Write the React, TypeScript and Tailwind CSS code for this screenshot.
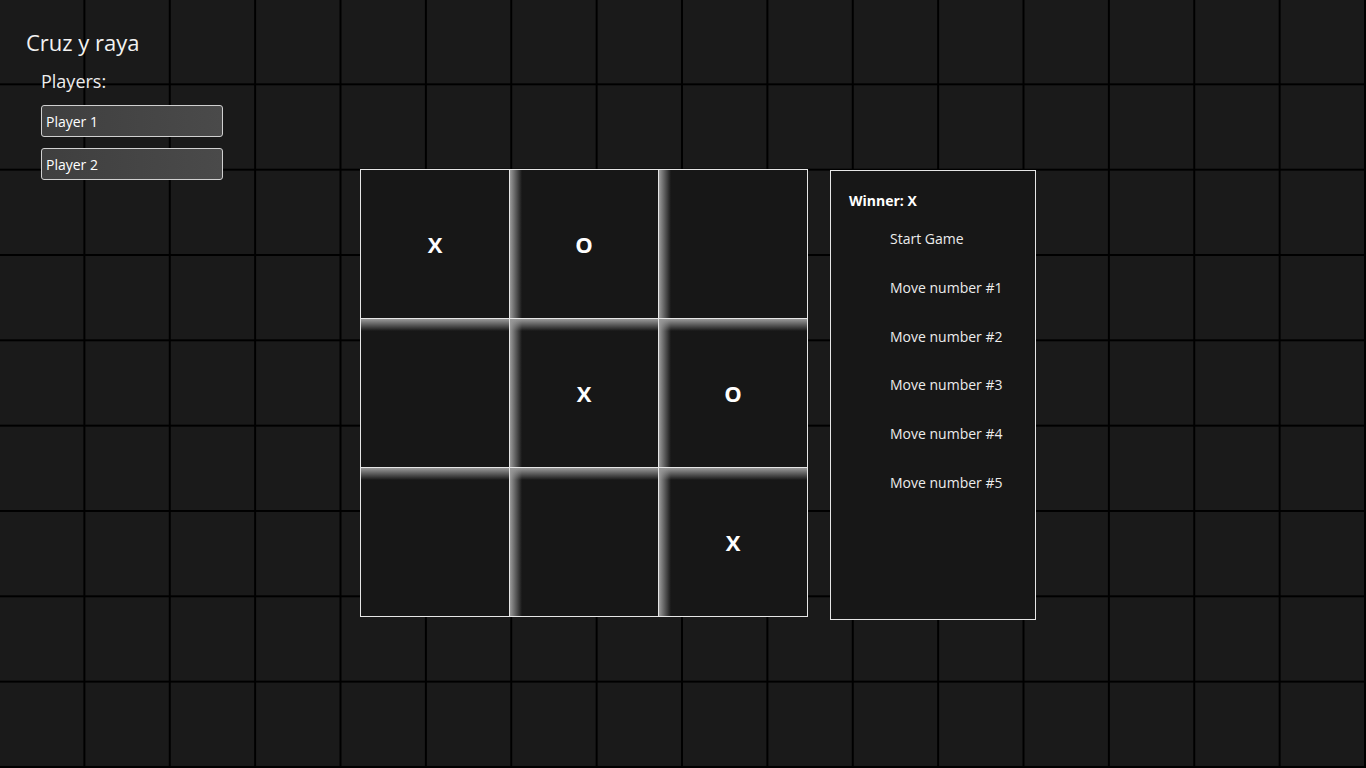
const BOARD: string[] = ["X", "O", "", "", "X", "O", "", "", "X"];
const MOVES = ["Start Game", "Move number #1", "Move number #2", "Move number #3", "Move number #4", "Move number #5"];

const FONT = { fontFamily: '"Open Sans", "Noto Sans", sans-serif' };

function Cell({ value, index }: { value: string; index: number }) {
  const row = Math.floor(index / 3);
  const col = index % 3;
  return (
    <div className="relative flex h-[149px] w-[149px] items-center justify-center border-b border-r border-[#e6e6e6] bg-[#171717]">
      {row > 0 && (
        <div className="absolute inset-x-0 top-0 h-[12px] bg-gradient-to-b from-[#9a9a9a] to-transparent" />
      )}
      {col > 0 && (
        <div className="absolute inset-y-0 left-0 w-[12px] bg-gradient-to-r from-[#9a9a9a] to-transparent" />
      )}
      <span className="relative text-[22px] font-bold text-white">{value}</span>
    </div>
  );
}

export default function App() {
  return (
    <div
      style={FONT}
      className="flex h-[768px] w-[1366px] overflow-hidden bg-[#1a1a1a] bg-[linear-gradient(to_right,transparent_calc(100%_-_2px),#000_calc(100%_-_2px)),linear-gradient(to_bottom,transparent_calc(100%_-_2px),#000_calc(100%_-_2px))] bg-[length:85.375px_85.333px] text-white"
    >
      <div className="w-[360px] shrink-0 pl-[26px] pt-[27px]">
        <h1 className="text-[22px] leading-[30px] text-[#f2f2f2]">Cruz y raya</h1>
        <div className="pl-[15px]">
          <p className="mt-[12px] text-[18px] leading-[24px] text-[#ededed]">Players:</p>
          <div className="mt-[12px] flex flex-col gap-[11px]">
            {["Player 1", "Player 2"].map((p) => (
              <div
                key={p}
                className="flex h-[32px] w-[182px] items-center rounded-[3px] border border-[#d0d0d0] bg-gradient-to-r from-[#3f3f3f] to-[#4a4a4a] px-[4px] text-[14px] text-white"
              >
                {p}
              </div>
            ))}
          </div>
        </div>
      </div>

      <div className="flex items-start pt-[169px]">
        <div className="grid grid-cols-3 border-l border-t border-[#e6e6e6]">
          {BOARD.map((v, i) => (
            <Cell key={i} value={v} index={i} />
          ))}
        </div>

        <div className="ml-[22px] mt-[1px] h-[450px] w-[206px] border border-[#e6e6e6] bg-[#171717] pl-[18px] pt-[20px]">
          <p className="text-[14px] font-bold leading-[20px] text-white">Winner: X</p>
          <div className="mt-[18px] flex flex-col gap-[28.8px] pl-[41px]">
            {MOVES.map((m) => (
              <p key={m} className="text-[14px] leading-[20px] text-[#ececec]">{m}</p>
            ))}
          </div>
        </div>
      </div>
    </div>
  );
}
